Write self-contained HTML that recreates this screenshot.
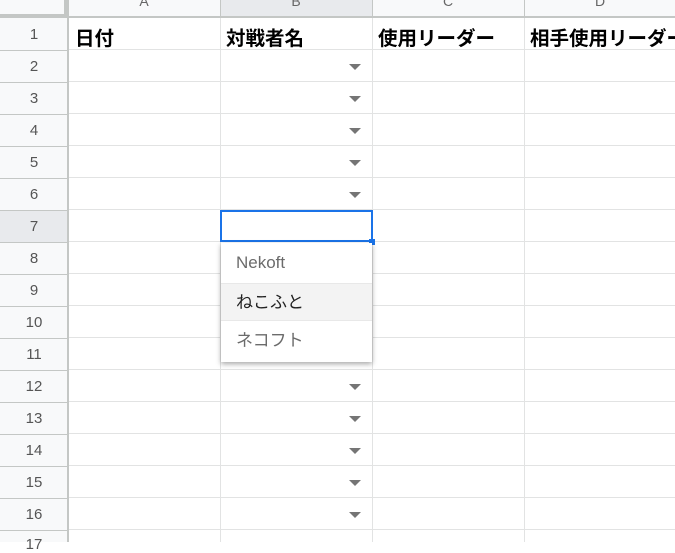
<!DOCTYPE html>
<html><head><meta charset="utf-8"><style>
*{margin:0;padding:0;box-sizing:border-box}
body{width:675px;height:542px;overflow:hidden;background:#fff;position:relative;font-family:"Liberation Sans","Noto Sans CJK JP",sans-serif}
.a{position:absolute}
.grid{left:0;top:18px;width:675px;height:524px;background:
repeating-linear-gradient(to bottom,transparent 0 31px,#e2e3e3 31px 32px);}
.vl{position:absolute;top:0;width:1px;height:542px;background:#e2e3e3}
.rh{left:0;top:18px;width:68px;height:524px;background:#f8f9fa}
.rhl{position:absolute;left:0;width:68px;height:1px;background:#c4c7c5}
.num{position:absolute;left:0;width:68px;text-align:center;font-size:15px;color:#555}
.colh{left:0;top:0;width:675px;height:18px;background:#f8f9fa;border-bottom:2px solid #c4c7c5}
.cl{position:absolute;top:-7px;font-size:14px;color:#666;text-align:center}
.hd{position:absolute;top:22px;font-size:19.5px;font-weight:bold;color:#000;white-space:nowrap}
.arr{position:absolute;left:349px;width:0;height:0;border-left:6px solid transparent;border-right:6px solid transparent;border-top:6px solid #757575}
.it{position:absolute;left:0;width:151px;height:38px;font-size:17px;color:#6b6b6b;padding-left:15px;line-height:38px}
</style></head><body>
<div class="a grid"></div>
<div class="vl" style="left:220px"></div>
<div class="vl" style="left:372px"></div>
<div class="vl" style="left:524px"></div>
<div class="a rh"></div>
<div class="a" style="left:0;top:210px;width:68px;height:32px;background:#e8eaed"></div>
<div class="a" style="left:67px;top:0;width:2px;height:542px;background:#c4c7c5"></div>
<div class="a colh"></div>
<div class="a" style="left:220px;top:0;width:152px;height:16px;background:#e8eaed"></div>
<div class="a" style="left:68px;top:0;width:1px;height:18px;background:#c4c7c5"></div>
<div class="a" style="left:220px;top:0;width:1px;height:18px;background:#c4c7c5"></div>
<div class="a" style="left:372px;top:0;width:1px;height:18px;background:#c4c7c5"></div>
<div class="a" style="left:524px;top:0;width:1px;height:18px;background:#c4c7c5"></div>
<div class="a" style="left:0;top:0;width:68px;height:18px;border-right:4px solid #c4c7c5;border-bottom:4px solid #c4c7c5;background:#f8f9fa"></div>
<div class="cl" style="left:68px;width:152px">A</div>
<div class="cl" style="left:220px;width:152px">B</div>
<div class="cl" style="left:372px;width:152px">C</div>
<div class="cl" style="left:524px;width:152px">D</div>
<div class="rhl" style="top:50px"></div><div class="rhl" style="top:82px"></div><div class="rhl" style="top:114px"></div><div class="rhl" style="top:146px"></div><div class="rhl" style="top:178px"></div><div class="rhl" style="top:210px"></div><div class="rhl" style="top:242px"></div><div class="rhl" style="top:274px"></div><div class="rhl" style="top:306px"></div><div class="rhl" style="top:338px"></div><div class="rhl" style="top:370px"></div><div class="rhl" style="top:402px"></div><div class="rhl" style="top:434px"></div><div class="rhl" style="top:466px"></div><div class="rhl" style="top:498px"></div><div class="rhl" style="top:530px"></div>
<div class="num" style="top:26px">1</div><div class="num" style="top:58px">2</div><div class="num" style="top:90px">3</div><div class="num" style="top:122px">4</div><div class="num" style="top:154px">5</div><div class="num" style="top:186px">6</div><div class="num" style="top:218px">7</div><div class="num" style="top:250px">8</div><div class="num" style="top:282px">9</div><div class="num" style="top:314px">10</div><div class="num" style="top:346px">11</div><div class="num" style="top:378px">12</div><div class="num" style="top:410px">13</div><div class="num" style="top:442px">14</div><div class="num" style="top:474px">15</div><div class="num" style="top:506px">16</div><div class="num" style="top:536px">17</div>
<div class="hd" style="left:75px">日付</div>
<div class="hd" style="left:226px">対戦者名</div>
<div class="hd" style="left:378px">使用リーダー</div>
<div class="hd" style="left:530px">相手使用リーダー</div>
<div class="arr" style="top:64px"></div><div class="arr" style="top:96px"></div><div class="arr" style="top:128px"></div><div class="arr" style="top:160px"></div><div class="arr" style="top:192px"></div>
<div class="arr" style="top:384px"></div><div class="arr" style="top:416px"></div><div class="arr" style="top:448px"></div><div class="arr" style="top:480px"></div><div class="arr" style="top:512px"></div>
<div class="a" style="left:220px;top:210px;width:153px;height:32px;border:2px solid #1a73e8;background:#fff"></div>
<div class="a" style="left:369px;top:239px;width:6px;height:6px;background:#1a73e8"></div>
<div class="a" style="left:221px;top:243px;width:151px;height:119px;background:#fff;box-shadow:0 2px 5px rgba(0,0,0,.35)">
<div class="it" style="top:1px">Nekoft</div>
<div class="it" style="top:40px;background:#f3f3f3;color:#222;border-top:1px solid #e8e8e8;border-bottom:1px solid #e8e8e8">ねこふと</div>
<div class="it" style="top:79px">ネコフト</div>
</div>
</body></html>
